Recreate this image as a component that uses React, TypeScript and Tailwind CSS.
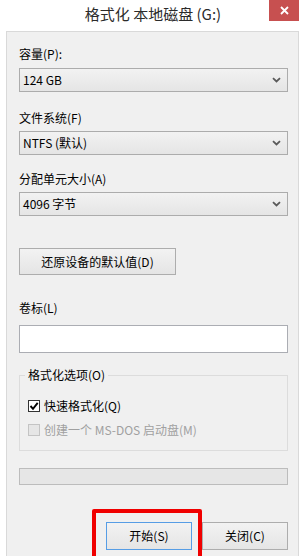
import React from 'react';

const FONT = 'font-["Noto_Sans_CJK_SC",sans-serif]';

function Chevron() {
  return (
    <svg width="9" height="6" viewBox="0 0 9 6" className="shrink-0">
      <path d="M1 1.2L4.5 4.5L8 1.2" fill="none" stroke="#5a5a5a" strokeWidth="1.8" />
    </svg>
  );
}

function Select({ value }: { value: string }) {
  return (
    <div className="h-[24px] w-[269px] flex items-center justify-between pl-[3px] pr-[6px] border border-[#acacac] bg-gradient-to-b from-[#f2f2f2] to-[#e5e5e5] text-[12px] text-black">
      <span>{value}</span>
      <Chevron />
    </div>
  );
}

function Label({ text, className = '' }: { text: string; className?: string }) {
  return <div className={`h-[18px] flex items-center text-[12px] text-black ${className}`}>{text}</div>;
}

export default function App() {
  return (
    <div className={`relative w-[306px] h-[556px] bg-white overflow-hidden flex flex-col ${FONT}`}>
      {/* title bar */}
      <div className="h-[31px] shrink-0 flex items-center justify-center text-[15px] text-[#2b2b2b] pb-[2px]">
        格式化 本地磁盘 (G:)
      </div>
      <div className="absolute top-0 left-[269px] w-[30px] h-[21px] bg-[#c75050] flex items-center justify-center">
        <svg width="9" height="9" viewBox="0 0 9 9">
          <path d="M1 1L8 8M8 1L1 8" stroke="#fff" strokeWidth="1.8" />
        </svg>
      </div>

      {/* dialog body */}
      <div className="flex-1 ml-[6px] mr-[7px] border-l border-r border-t border-[#d9d9d9] bg-[#f0f0f0] pl-[12px] pt-[13px] flex flex-col">
        <Label text="容量(P):" />
        <div className="mt-[5px]"><Select value="124 GB" /></div>

        <Label text="文件系统(F)" className="mt-[17px]" />
        <div className="mt-[4px]"><Select value="NTFS (默认)" /></div>

        <Label text="分配单元大小(A)" className="mt-[15px]" />
        <div className="mt-[4px]"><Select value="4096 字节" /></div>

        <div className="mt-[32px] w-[157px] h-[27px] border border-[#adadad] bg-gradient-to-b from-[#f2f2f2] to-[#e5e5e5] flex items-center justify-center text-[12px] text-black">
          还原设备的默认值(D)
        </div>

        <Label text="卷标(L)" className="mt-[24px]" />
        <div className="mt-[8px] w-[269px] h-[28px] border border-[#abadb3] bg-white" />

        {/* format options group */}
        <div className="relative mt-[22px] w-[269px] h-[76px] border border-[#dcdcdc] flex flex-col pl-[8px] pt-[23px]">
          <div className="absolute -top-[10px] left-[5px] px-[3px] bg-[#f0f0f0] text-[12px] text-black leading-[18px]">
            格式化选项(O)
          </div>
          <div className="flex items-center gap-[4px] h-[14px] text-[12px] text-black">
            <div className="w-[12px] h-[12px] border border-[#333] bg-white flex items-center justify-center">
              <svg width="10" height="10" viewBox="0 0 10 10">
                <path d="M1.5 5L4 7.8L8.7 1.8" fill="none" stroke="#000" strokeWidth="1.9" />
              </svg>
            </div>
            <span>快速格式化(Q)</span>
          </div>
          <div className="mt-[10px] flex items-center gap-[4px] h-[14px] text-[12px] text-[#a0a0a0]">
            <div className="w-[12px] h-[12px] border border-[#c4c4c4] bg-[#e6e6e6]" />
            <span>创建一个 MS-DOS 启动盘(M)</span>
          </div>
        </div>

        {/* progress bar */}
        <div className="mt-[17px] w-[269px] h-[17px] border border-[#bcbcbc] bg-[#e6e6e6]" />

        {/* buttons */}
        <div className="mt-[37px] w-[269px] flex justify-end gap-[10px]">
          <div className="w-[86px] h-[28px] border border-[#569de5] bg-gradient-to-b from-[#f2f2f2] to-[#e5e5e5] flex items-center justify-center text-[12px] text-black">
            开始(S)
          </div>
          <div className="w-[86px] h-[28px] border border-[#adadad] bg-gradient-to-b from-[#f2f2f2] to-[#e5e5e5] flex items-center justify-center text-[12px] text-black">
            关闭(C)
          </div>
        </div>
      </div>

      {/* red annotation box */}
      <div className="absolute left-[92px] top-[509px] w-[110px] h-[60px] border-[4px] border-[#f00000] rounded-[2px]" />
    </div>
  );
}
